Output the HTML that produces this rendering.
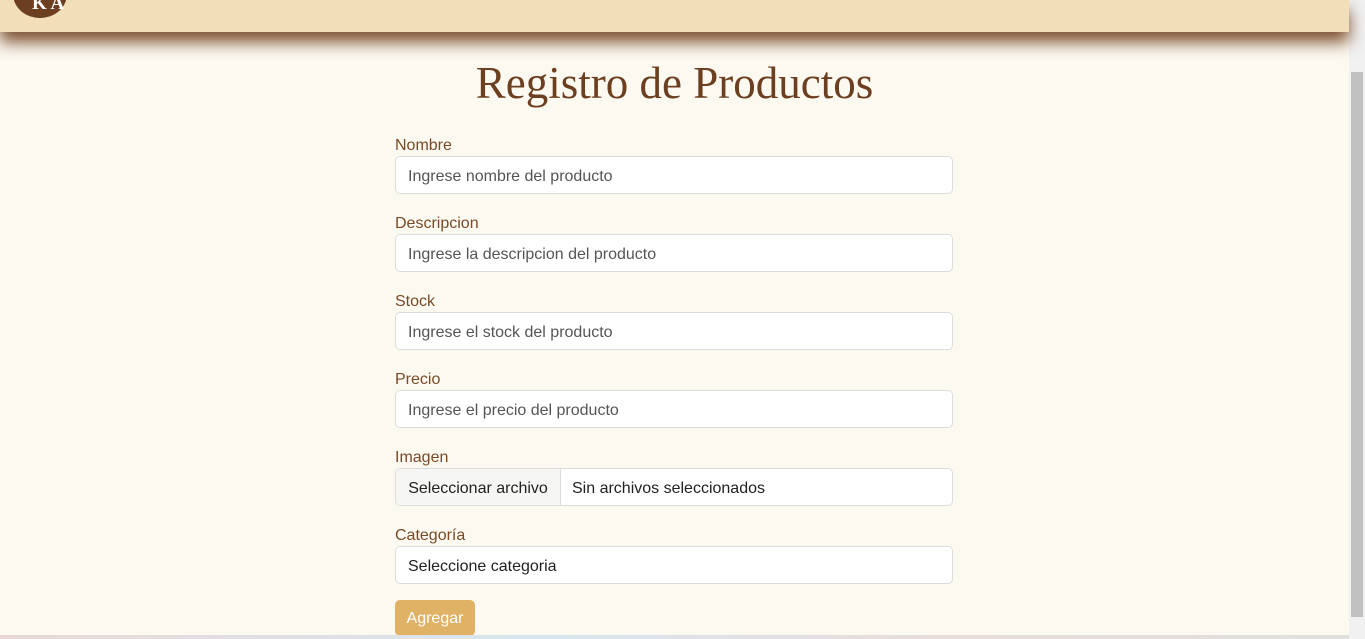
<!DOCTYPE html>
<html><head><meta charset="utf-8"><style>
body{margin:0;width:1365px;height:639px;overflow:hidden;background:#fcf9f1;font-family:"Liberation Sans",sans-serif;position:relative}
.nav{position:absolute;left:0;top:0;width:1349px;height:32px;background:#f2dfb9;box-shadow:0 10px 16px rgba(110,60,25,.9);z-index:2}
.logo{position:absolute;left:13px;top:-30px;width:54px;height:48px;border-radius:50%;background:#6b3f20;color:#fff;font-family:"Liberation Serif",serif;font-size:19px;font-weight:bold;line-height:12px}
.logo span{position:absolute}
h1{position:absolute;left:0;width:1349px;top:57px;margin:0;text-align:center;font-family:"Liberation Serif",serif;font-weight:normal;font-size:45px;color:#6b3f20}
.lbl{position:absolute;left:395px;font-size:16px;color:#7a4a28}
.in{position:absolute;left:395px;width:556px;height:36px;border:1px solid #dcdcdc;border-radius:5px;background:#fff;font-size:16px;color:#555;line-height:40px;text-indent:12px;box-sizing:content-box}
.file{padding:0;text-indent:0;overflow:hidden}
.file .b{position:absolute;left:0;top:0;width:164px;height:36px;background:#f6f6f4;border-right:1px solid #dcdcdc;color:#222;text-align:center}
.file .t{position:absolute;left:176px;color:#222}
.btn{position:absolute;left:395px;top:600px;width:80px;height:36px;background:#e0b265;border-radius:5px;color:#fff;font-size:16px;line-height:38px;text-align:center}
.sb{position:absolute;right:0;top:0;width:16px;height:639px;background:#f1f1f1}
.th{position:absolute;right:2px;top:72px;width:12px;height:545px;background:#c1c1c1}
.bot{position:absolute;left:0;top:635px;width:1349px;height:4px;background:linear-gradient(90deg,#e8d8d8,#d8e6ee 40%,#e9dcdc 70%,#e0e0e0)}
</style></head><body>
<div class="nav"><div class="logo"><span style="top:28px;left:19px">K A</span></div></div>
<h1>Registro de Productos</h1>
<div class="lbl" style="top:137px">Nombre</div>
<div class="in" style="top:156px">Ingrese nombre del producto</div>
<div class="lbl" style="top:215px">Descripcion</div>
<div class="in" style="top:234px">Ingrese la descripcion del producto</div>
<div class="lbl" style="top:293px">Stock</div>
<div class="in" style="top:312px">Ingrese el stock del producto</div>
<div class="lbl" style="top:371px">Precio</div>
<div class="in" style="top:390px">Ingrese el precio del producto</div>
<div class="lbl" style="top:449px">Imagen</div>
<div class="in file" style="top:468px"><div class="b">Seleccionar archivo</div><div class="t">Sin archivos seleccionados</div></div>
<div class="lbl" style="top:527px">Categoría</div>
<div class="in" style="top:546px;color:#222">Seleccione categoria</div>
<div class="btn">Agregar</div>
<div class="bot"></div>
<div class="sb"><div class="th"></div></div>
</body></html>
